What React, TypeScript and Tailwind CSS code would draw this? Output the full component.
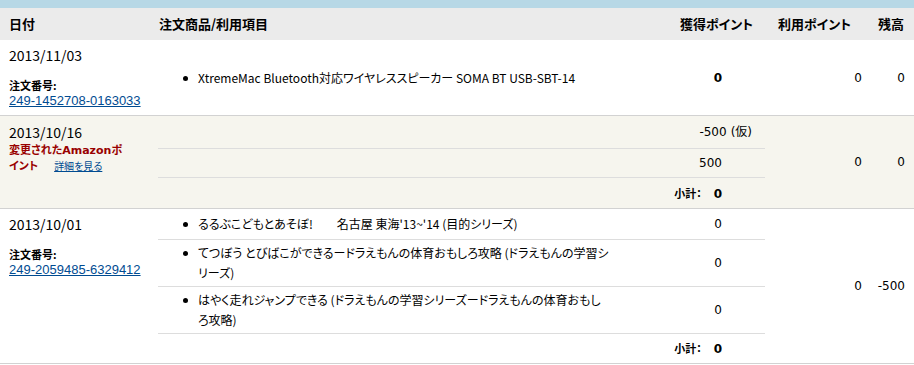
import React from 'react'

const jp = "font-['Noto_Sans_CJK_JP',sans-serif] [font-feature-settings:'palt']"
const num = "font-['DejaVu_Sans','Noto_Sans_CJK_JP',sans-serif]"
const linkCls =
  "font-['Liberation_Sans',Arial,sans-serif] text-[13px] leading-[16px] text-[#004b91] underline"

type Line = { name?: string[]; points: React.ReactNode; h: string; bold?: boolean }

// Date + order number block in the left column
const OrderInfo = ({ date, orderNo }: { date: string; orderNo: string }) => (
  <div className="w-[158px] shrink-0 pl-[9px] pt-[6px]">
    <div className="text-[14px] leading-[18px]">{date}</div>
    <div className="mt-[14px] text-[11px] font-bold leading-[14px]">注文番号:</div>
    <a href="#" className={`mt-px block ${linkCls}`}>
      {orderNo}
    </a>
  </div>
)

const ItemLine = ({ line, last }: { line: Line; last: boolean }) => (
  <div
    className={`flex ${line.h} items-center ${last ? '' : 'border-b border-[#dddddd]'}`}
  >
    <div className="flex w-[462px] items-start pl-[25px]">
      {line.name && (
        <>
          <span className="mt-[8px] h-[5px] w-[5px] shrink-0 rounded-full bg-black" />
          <span className="ml-[10px] text-[12px] leading-[20px]">
            {line.name.map((t, i) => (
              <span key={i} className="block whitespace-pre">
                {t}
              </span>
            ))}
          </span>
        </>
      )}
    </div>
    <div
      className={`w-[145px] pr-[43px] text-right text-[12px] leading-[16px] ${num} ${
        line.bold ? 'font-bold' : ''
      }`}
    >
      {line.points}
    </div>
  </div>
)

const Subtotal = ({ value }: { value: string }) => (
  <span className="font-bold">
    <span className={`${jp} text-[11px]`}>小計：</span>
    <span className="ml-[12px]">{value}</span>
  </span>
)

const Group = ({
  left,
  lines,
  used,
  balance,
  bg = 'bg-white',
}: {
  left: React.ReactNode
  lines: Line[]
  used: string
  balance: string
  bg?: string
}) => (
  <div className={`flex border-b border-[#d2d2d2] ${bg}`}>
    {left}
    <div className="flex w-[607px] flex-col">
      {lines.map((l, i) => (
        <ItemLine key={i} line={l} last={i === lines.length - 1} />
      ))}
    </div>
    <div className={`flex w-[101px] items-center justify-end pr-1 text-[12px] ${num}`}>
      {used}
    </div>
    <div className={`flex flex-1 items-center justify-end pr-[9px] text-[12px] ${num}`}>
      {balance}
    </div>
  </div>
)

export default function App() {
  return (
    <div className={`w-full bg-white text-black ${jp}`}>
      <div className="h-[8px] bg-[#b7d8e6]" />

      {/* column headings */}
      <div className="flex h-[32px] items-center bg-[#ebebeb] text-[13px] font-bold">
        <div className="w-[158px] pl-[9px]">日付</div>
        <div className="w-[462px] pl-px">注文商品/利用項目</div>
        <div className="w-[145px] pr-3 text-right">獲得ポイント</div>
        <div className="w-[101px] pl-[13px]">利用ポイント</div>
        <div className="flex-1 pl-3">残高</div>
      </div>

      <Group
        left={<OrderInfo date="2013/11/03" orderNo="249-1452708-0163033" />}
        lines={[
          {
            name: ['XtremeMac Bluetooth対応ワイヤレススピーカー SOMA BT USB-SBT-14'],
            points: '0',
            h: 'h-[75px]',
            bold: true,
          },
        ]}
        used="0"
        balance="0"
      />

      <Group
        bg="bg-[#f6f5ee]"
        left={
          <div className="w-[158px] shrink-0 pl-[9px] pt-[7px]">
            <div className="text-[14px] leading-[18px]">2013/10/16</div>
            <div className="w-[122px] leading-[12px]">
              <span className="text-[11px] font-bold text-[#990000] font-['DejaVu_Sans','Noto_Sans_CJK_JP',sans-serif]">
                変更されたAmazonポイント
              </span>
              <a href="#" className="ml-4 text-[10px] text-[#004b91] underline">
                詳細を見る
              </a>
            </div>
          </div>
        }
        lines={[
          {
            points: (
              <>
                -500
                <span className="-mr-[30px] ml-1">(仮)</span>
              </>
            ),
            h: 'h-[33px]',
          },
          { points: '500', h: 'h-[29px]' },
          { points: <Subtotal value="0" />, h: 'h-[30px]' },
        ]}
        used="0"
        balance="0"
      />

      <Group
        left={<OrderInfo date="2013/10/01" orderNo="249-2059485-6329412" />}
        lines={[
          {
            name: ["るるぶこどもとあそぼ!\u3000\u3000名古屋 東海'13~'14 (目的シリーズ)"],
            points: '0',
            h: 'h-[31px]',
          },
          {
            name: [
              'てつぼう とびばこができるードラえもんの体育おもしろ攻略 (ドラえもんの学習シ',
              'リーズ)',
            ],
            points: '0',
            h: 'h-[47px]',
          },
          {
            name: [
              'はやく走れジャンプできる (ドラえもんの学習シリーズードラえもんの体育おもし',
              'ろ攻略)',
            ],
            points: '0',
            h: 'h-[47px]',
          },
          { points: <Subtotal value="0" />, h: 'h-[29px]' },
        ]}
        used="0"
        balance="-500"
      />
    </div>
  )
}
